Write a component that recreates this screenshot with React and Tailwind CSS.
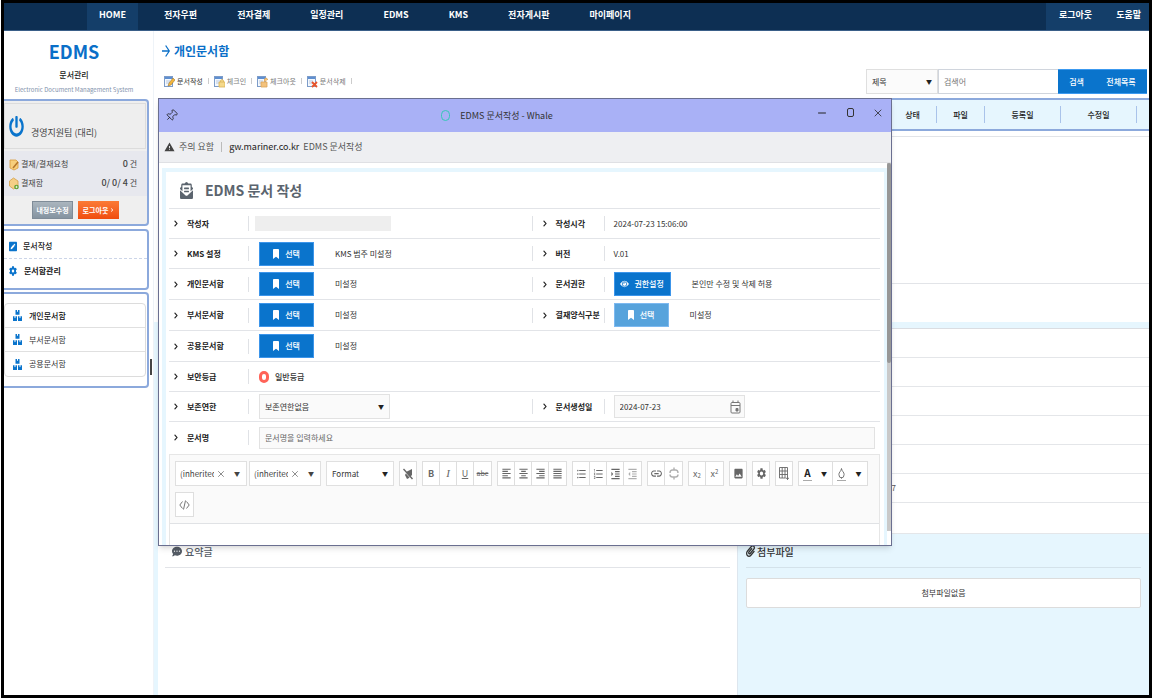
import React from 'react';
import { FaPowerOff, FaPenSquare, FaCog, FaBoxes, FaEnvelopeOpenText, FaBookmark, FaCommentDots, FaPaperclip, FaChevronRight } from 'react-icons/fa';
import {
  MdArrowForward, MdWarning, MdFormatAlignLeft, MdFormatAlignCenter, MdFormatAlignRight, MdFormatAlignJustify,
  MdFormatListBulleted, MdFormatListNumbered, MdFormatIndentIncrease, MdFormatIndentDecrease, MdLink, MdImage, MdSettings,
} from 'react-icons/md';
import { Pin, Minus, X, Droplet } from 'lucide-react';

const MENU = ['전자우편', '전자결제', '일정관리', 'EDMS', 'KMS', '전자게시판', '마이페이지'];
const FOLDERS = ['개인문서함', '부서문서함', '공용문서함'];

const COLUMNS = [
  { name: '상태', width: 'w-[48px]' },
  { name: '파일', width: 'w-[48px]' },
  { name: '등록일', width: 'w-[76px]' },
  { name: '수정일', width: 'w-[76px]' },
];

const DocIcon = ({ badge }) => (
  <svg width="11" height="13" viewBox="0 0 11 13">
    <rect x="0.5" y="1.5" width="8" height="10" fill="#f4f8fd" stroke="#7c9cc9" />
    <path d="M1 2h7v2H1z" fill="#5f8fd0" />
    <path d="M2 6h4M2 8h4" stroke="#a9bbd6" strokeWidth="0.8" />
    {badge === 'pen' && <path d="M4 11l1-3 4-5 2 2-4 5z" fill="#f3b53c" stroke="#8b6b2a" strokeWidth="0.5" />}
    {badge === 'lock' && <path d="M5 7h6v5H5zM6.5 7V5.5q1.500-2 3 0V7" fill="#f5d98b" stroke="#d9b255" strokeWidth="0.8" />}
    {badge === 'open' && <path d="M4 7h6v5H4zM7.500 7V4q1.500-2 3 0v1" fill="#f3c27c" stroke="#dba459" strokeWidth="0.8" />}
    {badge === 'x' && <path d="M5 7l5 5M10 7l-5 5" stroke="#e8542c" strokeWidth="1.800" />}
  </svg>
);

const TOOLS = [
  { name: '문서작성', badge: 'pen', style: 'text-[#333]' },
  { name: '체크인', badge: 'lock', style: 'text-[#777]' },
  { name: '체크아웃', badge: 'open', style: 'text-[#777]' },
  { name: '문서삭제', badge: 'x', style: 'text-[#777]' },
];

const TopBar = () => (
  <nav className="flex h-[28px] shrink-0 items-stretch border-b border-[#3a5f88] bg-[#0d2f53] text-[9px] font-bold text-white">
    <a href="#home" className="ml-[83px] flex w-[51px] items-center justify-center bg-[#143e69] pb-[3px]">HOME</a>
    <div className="ml-[6px] flex">
      {MENU.map((m) => (
        <a key={m} href={`#${m}`} className="flex items-center px-5 pb-[3px]">{m}</a>
      ))}
    </div>
    <div className="ml-auto flex w-[103px] items-center justify-between bg-[#143e69] pr-2 pb-[3px] pl-[13px]">
      <a href="#logout">로그아웃</a>
      <a href="#help">도움말</a>
    </div>
  </nav>
);

const Sidebar = () => (
  <aside className="flex w-[150px] shrink-0 flex-col border-r border-[#eef3f8]">
    <div className="flex h-[68px] w-[140px] flex-col items-center pt-[8px]">
      <h1 className="text-[18px] leading-[24px] font-bold text-[#0a6fc8]">EDMS</h1>
      <p className="mt-[4px] text-[8px] leading-[16px] font-medium text-[#222]">문서관리</p>
      <p className="text-[6px] leading-[14px] whitespace-nowrap text-[#8393ad]">Electronic Document Management System</p>
    </div>

    <section className="mr-[4px] h-[127px] rounded-r border-2 border-l-0 border-[#8ca9dc] bg-[#efefef] pt-[2px]">
      <div className="mr-px flex h-[46px] items-end gap-[7px] border border-[#dcdcdc] bg-[#eeeeee] pb-[8px] pl-[4px]">
        <FaPowerOff className="mb-[3px] h-[21px] w-[15px] text-[#0a74cc]" preserveAspectRatio="none" />
        <span className="text-[9px] leading-[14px] text-[#444]">경영지원팀 (대리)</span>
      </div>
      <div className="mt-[2px] flex h-[45px] flex-col justify-center bg-[#e7e8ee] pr-[10px] pl-[5px] text-[8px] text-[#444]">
        <div className="flex h-[19px] items-center gap-[2px]">
          <svg width="10" height="13" viewBox="0 0 10 13">
            <path d="M1 2h6l2 2v6l-4 2-4-2z" fill="#f7cf7c" stroke="#d99a3a" strokeWidth="0.8" />
            <path d="M4 10l5-6" stroke="#b5762c" strokeWidth="1.500" />
          </svg>
          <span>결재/결재요청</span>
          <span className="ml-auto"><b className="text-[9px] font-medium">0</b> 건</span>
        </div>
        <div className="flex h-[19px] items-center gap-[2px]">
          <svg width="10" height="13" viewBox="0 0 10 13">
            <path d="M0.500 4l4-3 4.500 3v5l-4.500 3-4-3z" fill="#f4cf86" stroke="#d4a048" strokeWidth="0.8" />
            <circle cx="7.500" cy="10" r="2.300" fill="#5aa02c" />
            <path d="M7.500 8.800v2.400M6.300 10h2.400" stroke="#fff" strokeWidth="0.7" />
          </svg>
          <span>결재함</span>
          <span className="ml-auto"><b className="text-[9px] font-medium">0/ 0/ 4</b> 건</span>
        </div>
      </div>
      <div className="flex gap-[5px] pt-[5px] pl-[28px] text-[7px] font-bold text-white">
        <button className="h-[18px] w-[41px] border border-[#7f8c98] bg-linear-to-b from-[#aab5be] to-[#8594a1]">내정보수정</button>
        <button className="flex h-[18px] w-[41px] items-center justify-center gap-[2px] bg-linear-to-b from-[#fb7a35] to-[#f04c0c]">
          로그아웃<FaChevronRight size={4} />
        </button>
      </div>
    </section>

    <section className="mt-[3px] mr-[4px] h-[61px] rounded-r border-2 border-l-0 border-[#8ca9dc] pt-[3px] text-[8px] font-medium text-[#222]">
      <a href="#write" className="flex h-[25px] items-center gap-[6px] border-b border-dashed border-[#ccd5e8] pl-[5px]">
        <FaPenSquare className="h-[11px] w-[8px] text-[#0a74cc]" preserveAspectRatio="none" />문서작성
      </a>
      <a href="#manage" className="flex h-[24px] items-center gap-[7px] pl-[5px] font-bold">
        <FaCog className="h-[10px] w-[8px] text-[#0a74cc]" preserveAspectRatio="none" />문서함관리
      </a>
    </section>

    <section className="mt-[2px] mr-[4px] h-[96px] rounded-r border-2 border-l-0 border-[#8ca9dc] pt-[9px] pr-px">
      <ul className="rounded-sm border border-[#dcdcdc] text-[8px] text-[#333]">
        {FOLDERS.map((f) => (
          <li key={f} className="h-[24px] border-b border-[#e0e0e0] first:font-medium first:text-[#111] last:border-b-0">
            <a href={`#${f}`} className="flex h-full items-center gap-[7px] pl-[8px]">
              <FaBoxes className="h-[11px] w-[9px] text-[#0a74cc]" preserveAspectRatio="none" />{f}
            </a>
          </li>
        ))}
      </ul>
    </section>
  </aside>
);

const SearchBar = () => (
  <form className="flex h-[25px] w-[281px] text-[8px]">
    <div className="relative w-[72px] border border-[#dfdfdf] bg-[#fbfbfb]">
      <select aria-label="검색 조건" className="h-full w-full appearance-none pl-[5px] text-[#333]">
        <option>제목</option>
      </select>
      <span className="pointer-events-none absolute inset-y-0 right-[5px] flex items-center text-[6px] text-[#222]">▼</span>
    </div>
    <input aria-label="검색어" placeholder="검색어" className="w-[120px] border border-r-0 border-[#d0d5dd] pl-[5px] placeholder:text-[#777]" />
    <button type="button" className="w-[37px] border-y border-[#3c9af0] bg-[#0a74cc] font-medium text-white">검색</button>
    <button type="button" className="flex-1 border-y border-[#3c9af0] bg-[#0a74cc] font-medium text-white">전체목록</button>
  </form>
);

const Background = () => (
  <main className="flex min-w-0 flex-1 flex-col">
    <div className="flex h-[67px] items-start justify-between pr-[2px]">
      <div className="pt-[10px] pl-[6px]">
        <h2 className="flex items-center gap-[2px] text-[12px] leading-[20px] font-bold text-[#0a6fc8]">
          <MdArrowForward className="h-[18px] w-[12px]" preserveAspectRatio="none" />개인문서함
        </h2>
        <div className="mt-[12px] flex items-center pl-[4px] text-[7px] leading-[16px]">
          {TOOLS.map((t) => (
            <button key={t.name} className={`mr-[5px] flex items-center gap-[2px] ${t.style}`}>
              <DocIcon badge={t.badge} />{t.name}
              <i className="ml-[3px] h-[6px] w-px bg-[#ccc]" />
            </button>
          ))}
        </div>
      </div>
      <div className="pt-[38px]"><SearchBar /></div>
    </div>

    <div className="ml-[4px]">
      <table className="h-[33px] w-full border-2 border-r-0 border-[#8ca9dc] bg-[#e6f6fe] text-[8px] text-[#222]">
        <thead>
          <tr>
            <th />
            {COLUMNS.map((c) => (
              <th key={c.name} className={`font-medium ${c.width}`}>
                <div className="h-[17px] border-r border-[#a9c3ea] leading-[17px]">{c.name}</div>
              </th>
            ))}
            <th className="w-[12px]" />
          </tr>
        </thead>
      </table>
      <div className="mt-[5px] h-[148px] border-y border-[#e2e4e8]" />
      <div className="h-[38px]" />
    </div>

    <div className="flex flex-1 flex-col bg-[#e6f6fe] pl-[4px]">
      <div className="mt-[6px] border-t border-[#dadde2] bg-white text-[8px] text-[#555]">
        {['', '', '', '', '', '67', ''].map((v, i) => (
          <div key={i} className="flex h-[29px] items-center border-b border-[#e4e6e9] pl-[729px] last:h-[31px]">{v}</div>
        ))}
      </div>
      <div className="flex flex-1">
        <section className="flex-1 border-r border-[#dde6ee] bg-white px-[7px] pt-[6px]">
          <h3 className="flex h-[28px] items-center gap-[3px] border-b border-[#e2e4e8] pb-[5px] pl-[7px] text-[10px] font-medium text-[#555c66]">
            <FaCommentDots className="h-[11px] w-[10px]" preserveAspectRatio="none" />요약글
          </h3>
        </section>
        <section className="w-[411px] px-[8px] pt-[6px]">
          <h3 className="flex h-[28px] items-center gap-[2px] border-b border-[#d4e2ea] pb-[5px] text-[10px] font-medium text-[#333]">
            <FaPaperclip className="h-[12px] w-[9px]" preserveAspectRatio="none" />첨부파일
          </h3>
          <p className="mt-[10px] rounded-xs border border-[#dcdcdc] bg-white text-center text-[8px] leading-[28px] text-[#333]">첨부파일없음</p>
        </section>
      </div>
    </div>
  </main>
);

const EyeIcon = () => (
  <svg width="9" height="10" viewBox="0 0 18 16">
    <path d="M0 8Q9-5 18 8Q9 21 0 8z" fill="currentColor" />
    <circle cx="9" cy="8" r="4.500" fill="none" stroke="#0a74cc" strokeWidth="1.600" />
    <path d="M7 7q1-2 3-1" stroke="#0a74cc" strokeWidth="1.500" fill="none" />
  </svg>
);

const PickButton = ({ id, light, wide }) => (
  <button
    id={id}
    type="button"
    className={`flex h-[24px] items-center justify-center border text-[8px] font-medium text-white ${light ? 'border-[#7db9f0] bg-[#57a3dc]' : 'border-[#3c95ea] bg-[#0a74cc]'} ${wide ? 'w-[57px] gap-[5px]' : 'w-[55px] gap-[6px]'}`}
  >
    {wide ? <EyeIcon /> : <FaBookmark className="h-[10px] w-[6px]" preserveAspectRatio="none" />}
    {wide ? '권한설정' : '선택'}
  </button>
);

const Label = ({ htmlFor, children, first }) => (
  <div className={`flex h-[15px] shrink-0 items-center ${first ? 'w-[80px] pl-[5px]' : 'w-[73px] border-l border-[#e0e2e6] pl-[10px]'}`}>
    <FaChevronRight className="h-[7px] w-[4px] shrink-0 text-[#222]" preserveAspectRatio="none" />
    <label htmlFor={htmlFor} className="ml-[9px] text-[8px] font-bold whitespace-nowrap text-[#222]">{children}</label>
    <i className="ml-auto h-[15px] w-px bg-[#e0e2e6]" />
  </div>
);

const Row = ({ label, id, tall, children, side }) => (
  <div className={`flex items-center border-b border-[#e2e4e8] text-[8px] text-[#333] ${tall ? 'h-[31px]' : 'h-[30px]'}`}>
    <div className={`flex items-center ${side ? 'w-[51%]' : 'flex-1'}`}>
      <Label htmlFor={id} first>{label}</Label>
      {children}
    </div>
    {side}
  </div>
);

const Side = ({ label, id, children }) => (
  <div className="flex flex-1 items-center">
    <Label htmlFor={id}>{label}</Label>
    <div className="ml-[9px] flex items-center gap-[21px]">{children}</div>
  </div>
);

const Pick = ({ id, text }) => (
  <div className="ml-[10px] flex items-center gap-[21px]">
    <PickButton id={id} /><span>{text}</span>
  </div>
);

const Group = ({ children }) => (
  <div className="flex h-[25px] divide-x divide-[#dedede] border border-[#dedede] bg-white text-[#666]">{children}</div>
);

const Tool = ({ label, faded, single, children }) => (
  <button
    type="button"
    aria-label={label}
    className={`flex items-center justify-center text-[9px] ${single ? 'w-[16px]' : 'w-[17px]'} ${faded ? 'text-[#b0b0b0]' : ''}`}
  >
    {children}
  </button>
);

const FontCombo = ({ label }) => (
  <div className="flex h-[25px] w-[72px] items-center border border-[#e0e0e0] bg-white text-[8px] text-[#444]">
    <input aria-label={label} readOnly value="(inherited" className="ml-[4px] w-[34px]" />
    <button type="button" aria-label="지우기" className="w-[14px]"><X size={10} className="mx-auto text-[#777]" /></button>
    <button type="button" aria-label="열기" className="flex-1 text-[6px]">▼</button>
  </div>
);

const EditorToolbar = () => (
  <div className="flex flex-wrap gap-x-[5px] gap-y-[6px] border-b border-[#e0e2e5] bg-[#fafafa] px-[5px] py-[6px]">
    <div className="flex gap-[2px]">
      <FontCombo label="글꼴" />
      <FontCombo label="글자 크기" />
    </div>
    <div className="relative h-[25px] w-[68px] border border-[#e0e0e0] bg-white text-[8px] text-[#333]">
      <select aria-label="Format" className="block h-full w-full appearance-none pl-[5px]"><option>Format</option></select>
      <span className="pointer-events-none absolute inset-y-0 right-[5px] flex items-center text-[6px] text-[#222]">▼</span>
    </div>
    <Group>
      <Tool label="서식 지우기" single>
        <svg width="10" height="12" viewBox="0 0 10 12">
          <path d="M4 3.500L9 1v6L6 10 4 11 2 7z" fill="currentColor" />
          <path d="M0.500 2.500l8 8.500" stroke="#fff" strokeWidth="1" />
          <path d="M0.500 1l9 10" stroke="currentColor" strokeWidth="1.400" />
        </svg>
      </Tool>
    </Group>
    <Group>
      <Tool label="굵게"><b>B</b></Tool>
      <Tool label="기울임"><i className="font-['Liberation_Serif',serif] text-[11px]">I</i></Tool>
      <Tool label="밑줄"><u>U</u></Tool>
      <Tool label="취소선"><s className="text-[7px]">abc</s></Tool>
    </Group>
    <Group>
      <Tool label="왼쪽 맞춤"><MdFormatAlignLeft className="h-[13px] w-[11px]" preserveAspectRatio="none" /></Tool>
      <Tool label="가운데 맞춤"><MdFormatAlignCenter className="h-[13px] w-[11px]" preserveAspectRatio="none" /></Tool>
      <Tool label="오른쪽 맞춤"><MdFormatAlignRight className="h-[13px] w-[11px]" preserveAspectRatio="none" /></Tool>
      <Tool label="양쪽 맞춤"><MdFormatAlignJustify className="h-[13px] w-[11px]" preserveAspectRatio="none" /></Tool>
    </Group>
    <Group>
      <Tool label="글머리 기호"><MdFormatListBulleted className="h-[14px] w-[11px]" preserveAspectRatio="none" /></Tool>
      <Tool label="번호 매기기"><MdFormatListNumbered className="h-[14px] w-[11px]" preserveAspectRatio="none" /></Tool>
      <Tool label="들여쓰기"><MdFormatIndentIncrease className="h-[14px] w-[11px]" preserveAspectRatio="none" /></Tool>
      <Tool label="내어쓰기" faded><MdFormatIndentDecrease className="h-[14px] w-[11px]" preserveAspectRatio="none" /></Tool>
    </Group>
    <Group>
      <Tool label="링크"><MdLink className="h-[15px] w-[13px]" preserveAspectRatio="none" /></Tool>
      <Tool label="링크 해제" faded>
        <svg width="10" height="13" viewBox="0 0 10 13" fill="none" stroke="currentColor" strokeWidth="1.400">
          <path d="M1 6q0-3 2.500-3h3Q9 3 9 6M1 7.500q0 2.500 2.500 2.500h3Q9 10 9 7.500M5 0.500v2M5 10.500v2" />
        </svg>
      </Tool>
    </Group>
    <Group>
      <Tool label="아래 첨자"><span>x<sub className="text-[6px]">2</sub></span></Tool>
      <Tool label="위 첨자"><span>x<sup className="text-[6px]">2</sup></span></Tool>
    </Group>
    <Group><Tool label="이미지" single><MdImage className="h-[13px] w-[11px]" preserveAspectRatio="none" /></Tool></Group>
    <Group><Tool label="설정" single><MdSettings className="h-[13px] w-[11px]" preserveAspectRatio="none" /></Tool></Group>
    <Group>
      <Tool label="표 만들기" single>
        <svg width="10" height="13" viewBox="0 0 10 13" fill="none" stroke="currentColor" strokeWidth="0.900">
          <path d="M0.500 0.500h8v9.500M0.500 0.500v10.500h6M0.500 4h8M0.500 7.500h8M3.200 0.500V11M6 0.500V11M8.500 9.500v3.500M6.800 11.300H10" />
        </svg>
      </Tool>
    </Group>
    <Group>
      <div className="flex w-[34px]">
        <button type="button" aria-label="글자색" className="flex w-[17px] flex-col items-center justify-center text-[10px] leading-[12px] font-bold text-[#222]">
          A<i className="mt-px h-px w-[9px] bg-[#aaa]" />
        </button>
        <button type="button" aria-label="글자색 선택" className="flex-1 text-[6px] text-[#222]">▼</button>
      </div>
      <div className="flex w-[34px]">
        <button type="button" aria-label="배경색" className="flex w-[17px] flex-col items-center justify-center">
          <Droplet className="h-[12px] w-[9px]" preserveAspectRatio="none" /><i className="mt-px h-px w-[9px] bg-[#aaa]" />
        </button>
        <button type="button" aria-label="배경색 선택" className="flex-1 text-[6px] text-[#222]">▼</button>
      </div>
    </Group>
    <Group>
      <Tool label="HTML 보기">
        <svg width="11" height="10" viewBox="0 0 11 10" fill="none" stroke="#777" strokeWidth="1">
          <path d="M3.500 1.500L0.800 5l2.700 3.500M7.500 1.500L10.200 5 7.500 8.500M6.500 0.500l-2 9" />
        </svg>
      </Tool>
    </Group>
  </div>
);

const CalendarIcon = () => (
  <svg width="11" height="14" viewBox="0 0 11 14" fill="none" stroke="#777" strokeWidth="1">
    <rect x="1" y="2.500" width="9" height="10.500" rx="1" />
    <path d="M1 5.500h9M3 0.500v2M8 0.500v2" />
    <path d="M6 8.500h2v2.500H6z" fill="#777" />
  </svg>
);

const WriteForm = () => (
  <form className="pr-[4px] pl-[3px]">
    <h2 className="flex h-[37px] items-center gap-[12px] border-b border-[#e2e4e8] pl-[11px] text-[14px] font-bold text-[#5b646e]">
      <FaEnvelopeOpenText className="h-[17px] w-[13px]" preserveAspectRatio="none" />EDMS 문서 작성
    </h2>
    <Row label="작성자" id="writer" side={<Side label="작성시각">2024-07-23 15:06:00</Side>}>
      <input id="writer" readOnly className="ml-[6px] h-[15px] w-[136px] bg-[#eeeeee]" />
    </Row>
    <Row label="KMS 설정" id="kms" side={<Side label="버전">V.01</Side>}><Pick id="kms" text="KMS 범주 미설정" /></Row>
    <Row tall label="개인문서함" id="personal" side={<Side label="문서권한" id="auth"><PickButton id="auth" wide /><span>본인만 수정 및 삭제 허용</span></Side>}>
      <Pick id="personal" text="미설정" />
    </Row>
    <Row tall label="부서문서함" id="dept" side={<Side label="결재양식구분" id="kind"><PickButton id="kind" light /><span>미설정</span></Side>}>
      <Pick id="dept" text="미설정" />
    </Row>
    <Row tall label="공용문서함" id="shared"><Pick id="shared" text="미설정" /></Row>
    <Row label="보안등급" id="level">
      <input type="radio" id="level" name="level" className="ml-[10px] h-[12px] w-[10px] appearance-none rounded-full border-[3px] border-[#ff6358]" />
      <span className="ml-[6px] font-medium">일반등급</span>
    </Row>
    <Row
      label="보존연한"
      id="keep"
      side={
        <Side label="문서생성일" id="created">
          <div className="flex h-[23px] w-[131px] items-center border border-[#e2e2e2] bg-[#fafafa] pr-[3px]">
            <input id="created" defaultValue="2024-07-23" className="min-w-0 flex-1 pl-[5px]" />
            <CalendarIcon />
          </div>
        </Side>
      }
    >
      <div className="relative ml-[10px] h-[25px] w-[131px] border border-[#e2e2e2] bg-[#fafafa]">
        <select id="keep" className="h-full w-full appearance-none pl-[5px]"><option>보존연한없음</option></select>
        <span className="pointer-events-none absolute inset-y-0 right-[5px] flex items-center text-[6px] text-[#222]">▼</span>
      </div>
    </Row>
    <div className="flex h-[31px] items-center">
      <Label htmlFor="subject" first>문서명</Label>
      <input id="subject" placeholder="문서명을 입력하세요" className="mr-[5px] ml-[10px] h-[22px] flex-1 border border-[#e2e2e2] bg-[#fafafa] pl-[5px] text-[8px] placeholder:text-[#666]" />
    </div>
    <div className="mt-px h-[200px] border border-[#e6e6e6]">
      <EditorToolbar />
    </div>
  </form>
);

const Popup = () => (
  <div className="absolute top-[95px] left-[154px] flex h-[448px] w-[734px] flex-col border border-[#6a6f90] bg-white shadow-md">
    <div className="flex h-[33px] shrink-0 items-center bg-[#a9b1f6] text-[#222]">
      <Pin size={13} strokeWidth={1.5} className="ml-[6px] shrink-0 rotate-45" />
      <div className="flex flex-1 items-center justify-center gap-[10px] text-[9px] text-[#333]">
        <i className="h-[11px] w-[9px] rounded-full border-[1.5px] border-[#35c8b8]" />
        EDMS 문서작성 - Whale
      </div>
      <div className="flex gap-[16px] pr-[7px] pb-[6px]">
        <button aria-label="최소화"><Minus size={12} strokeWidth={2} /></button>
        <button aria-label="최대화" className="flex w-[12px] items-center justify-center"><i className="h-[9px] w-[7px] rounded-xs border border-[#333]" /></button>
        <button aria-label="닫기"><X size={12} strokeWidth={1.5} /></button>
      </div>
    </div>
    <div className="flex h-[31px] shrink-0 items-center border-b border-[#dfe0e4] bg-[#eeeff2] pl-[5px] text-[9px] text-[#555]">
      <MdWarning className="h-[12px] w-[11px] text-[#444]" />
      <span className="ml-[4px]">주의 요함</span>
      <i className="mx-[7px] h-[10px] w-px bg-[#bbb]" />
      <span className="text-[#222]">gw.mariner.co.kr</span>
      <span className="ml-[4px]">EDMS 문서작성</span>
    </div>
    <div className="flex min-h-0 flex-1">
      <div className="mt-[5px] ml-[3px] flex-1 overflow-hidden border-4 border-r-[3px] border-b-0 border-[#e6f6fe]">
        <WriteForm />
      </div>
      <div className="mb-[14px] w-[4px] bg-[#c9c9c9]"><div className="h-[200px] rounded-full bg-[#979797]" /></div>
    </div>
  </div>
);

const App = () => (
  <div className="h-screen min-h-[600px] bg-white pb-[2px] pl-px font-['Noto_Sans_CJK_KR','Open_Sans',sans-serif]">
    <div className="relative flex h-full flex-col overflow-hidden border-[3px] border-black">
      <TopBar />
      <div className="flex min-h-0 flex-1">
        <Sidebar />
        <Background />
      </div>
      {/* splitter handle */}
      <i className="absolute top-[356px] left-[146px] h-[16px] w-[2px] bg-[#444]" />
      <Popup />
    </div>
  </div>
);

export default App;
